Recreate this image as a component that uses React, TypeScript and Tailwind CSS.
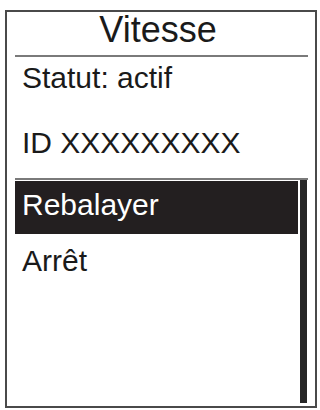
import React from "react";

export default function App() {
  return (
    <div
      className="w-[320px] h-[410px] bg-white pt-[10px] pl-[5px] pr-[3px] pb-[2px]"
      style={{ fontFamily: '"Liberation Sans", Arial, sans-serif' }}
    >
      <div className="h-full border-2 border-[#4a4a4a] flex flex-col text-[#1a1a1a]">
        <div className="h-[43px] leading-[35px] text-[36px] text-center pr-[6px]">Vitesse</div>
        <div className="ml-[8px] mr-[7px] h-[2px] bg-[#7a7a7a]" />
        <div className="pl-[15px] text-[30px] leading-[42px]">Statut: actif</div>
        <div className="pl-[15px] mt-[23px] text-[30px] leading-[42px]">ID XXXXXXXXX</div>
        <div className="ml-[8px] mr-[7px] mt-[14px] h-[2px] bg-[#7a7a7a]" />
        <div className="flex-1 flex pl-[8px] pr-[8px] pb-[3px] gap-[2px]">
          <div className="flex-1 flex flex-col">
            <div className="mt-[1px] h-[53px] bg-[#231f20] text-white pl-[7px] text-[30px] leading-[47px]">
              Rebalayer
            </div>
            <div className="mt-[6px] pl-[7px] text-[30px] leading-[42px]">Arrêt</div>
          </div>
          <div className="w-[7px] bg-[#262626]" />
        </div>
      </div>
    </div>
  );
}
